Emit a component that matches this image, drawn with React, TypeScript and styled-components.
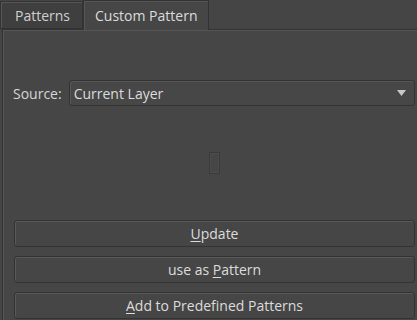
import React from "react";
import styled, { createGlobalStyle } from "styled-components";

const Global = createGlobalStyle`
  html, body { margin: 0; padding: 0; background: #454545; }
  body { font-family: "Open Sans", "Noto Sans", sans-serif; font-size: 14px; color: #d6d6d6; }
`;

const Root = styled.div`
  width: 417px;
  height: 320px;
  overflow: hidden;
  background: #454545;
  display: flex;
  flex-direction: column;
`;

const TabBar = styled.div`
  display: flex;
  align-items: flex-end;
  height: 29px;
  flex-shrink: 0;
`;

const Tab = styled.div<{ $active?: boolean }>`
  box-sizing: border-box;
  height: ${(p) => (p.$active ? "30px" : "28px")};
  margin-bottom: ${(p) => (p.$active ? "-1px" : "0")};
  padding: ${(p) => (p.$active ? "0 11px 0 11px" : "0 12px 0 14px")};
  display: flex;
  align-items: center;
  background: ${(p) => (p.$active ? "#464646" : "#3f3f3f")};
  border: 1px solid #333;
  border-bottom: ${(p) => (p.$active ? "none" : "1px solid #333")};
  box-shadow: inset 1px 1px 0 #565656;
  color: ${(p) => (p.$active ? "#dcdcdc" : "#cfcfcf")};
  position: relative;
  z-index: ${(p) => (p.$active ? 1 : 0)};
  white-space: nowrap;
`;

const Pane = styled.div`
  flex: 1;
  margin-left: 2px;
  border-left: 1px solid #333;
  border-top: 1px solid #333;
  box-shadow: inset 1px 1px 0 #555;
  background: #464646;
  display: flex;
  flex-direction: column;
  padding: 50px 2px 0 10px;
`;

const SourceRow = styled.div`
  display: flex;
  align-items: center;
  gap: 7px;
  height: 26px;
`;

const Label = styled.span`
  color: #d6d6d6;
`;

const Combo = styled.div`
  flex: 1;
  box-sizing: border-box;
  height: 26px;
  display: flex;
  align-items: center;
  justify-content: space-between;
  padding: 0 8px 0 4px;
  background: #474747;
  border: 1px solid #333;
  border-radius: 3px;
  box-shadow: inset 1px 1px 0 #585858;
  color: #dcdcdc;
`;

const Arrow = styled.svg`
  width: 9px;
  height: 6px;
`;

const Preview = styled.div`
  height: 114px;
  display: flex;
  align-items: center;
  justify-content: center;
`;

const Thumb = styled.div`
  width: 9px;
  height: 20px;
  border: 1px solid #3a3a3a;
  box-shadow: inset 0 0 0 1px #4c4c4c;
`;

const Buttons = styled.div`
  display: flex;
  flex-direction: column;
  gap: 9px;
  padding-left: 1px;
`;

const Button = styled.button`
  box-sizing: border-box;
  height: 27px;
  width: 100%;
  background: #464646;
  border: 1px solid #333;
  border-radius: 3px;
  box-shadow: inset 1px 1px 0 #595959;
  color: #dcdcdc;
  font-family: "Open Sans", "Noto Sans", sans-serif;
  font-size: 14px;
  padding: 0;
  display: flex;
  align-items: center;
  justify-content: center;
`;

const U = styled.span`
  text-decoration: underline;
  text-underline-offset: 2px;
`;

export default function App() {
  return (
    <Root>
      <Global />
      <TabBar>
        <Tab>Patterns</Tab>
        <Tab $active>Custom Pattern</Tab>
      </TabBar>
      <Pane>
        <SourceRow>
          <Label>Source:</Label>
          <Combo>
            <span>Current Layer</span>
            <Arrow viewBox="0 0 9 6">
              <path d="M0 0 H9 L4.5 6 Z" fill="#c8c8c8" />
            </Arrow>
          </Combo>
        </SourceRow>
        <Preview>
          <Thumb />
        </Preview>
        <Buttons>
          <Button>
            <U>U</U>pdate
          </Button>
          <Button>
            use as&nbsp;<U>P</U>attern
          </Button>
          <Button>
            <U>A</U>dd to Predefined Patterns
          </Button>
        </Buttons>
      </Pane>
    </Root>
  );
}
